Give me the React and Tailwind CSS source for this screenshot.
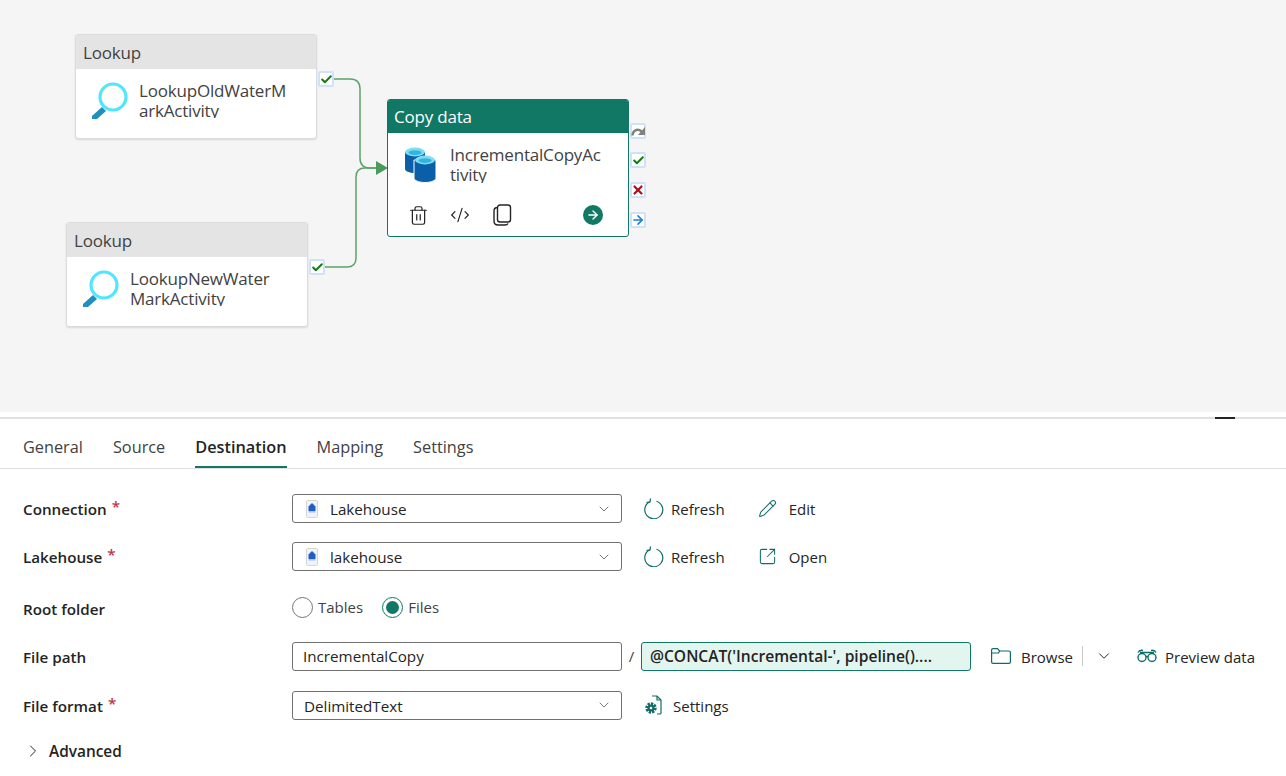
import { ChevronDown, ChevronRight, Pencil, SquareArrowOutUpRight, Trash2, CodeXml, ArrowRight, Check, X } from "lucide-react";

const font = "font-['Open_Sans','Noto_Sans',sans-serif]";

function LookupIcon() {
  return (
    <svg width="38" height="40" viewBox="0 0 38 40" fill="none">
      <path d="M1 34l10-9 4 4-9 8H1z" fill="#1f8fbd" />
      <circle cx="22" cy="15" r="13" stroke="#50e6ff" strokeWidth="3.2" fill="#fff" />
    </svg>
  );
}

function CopyIcon() {
  const Can = ({ x, y }) => (
    <g>
      <path d={`M${x} ${y}v17c0 2 4 4 10 4s10-2 10-4v-17z`} fill="#0a5fa8" />
      <ellipse cx={x + 10} cy={y} rx="10" ry="4.4" fill="#7fdcf2" />
      <ellipse cx={x + 10} cy={y + 0.6} rx="6.6" ry="2.4" fill="#2fb5e0" />
    </g>
  );
  return (
    <svg width="32" height="36" viewBox="0 0 32 36">
      <Can x={1} y={5} />
      <path d="M10 13h22v18c0 2.4-4.5 4.500-11 4.500S10 33.400 10 31z" fill="#0a5fa8" stroke="#fff" strokeWidth="1" />
      <Can x={11} y={13} />
    </svg>
  );
}

function LakehouseIcon() {
  return (
    <svg width="12" height="18" viewBox="0 0 12 18">
      <rect x="0.5" y="0.5" width="11" height="17" rx="1" fill="#f3f3f3" stroke="#d6d6d6" />
      <path d="M2.5 6.5L6 3l3.5 3.5V11h-7z" fill="#1d5fc4" />
      <rect x="2.5" y="11" width="7" height="1.6" fill="#a9c4ea" />
    </svg>
  );
}

function RefreshIcon() {
  return (
    <svg width="20" height="21" viewBox="0 0 20 21" fill="none" stroke="#0f6d67" strokeWidth="1.2">
      <path d="M12.500 3.200A9 9 0 1 1 6 3.600" />
      <path d="M6.500 0.500L6 4l-3.500.3" />
    </svg>
  );
}

function FolderIcon() {
  return (
    <svg width="20" height="16" viewBox="0 0 20 16" fill="none" stroke="#0f6d67" strokeWidth="1.2">
      <path d="M.6 14V2a1.400 1.400 0 0 1 1.400-1.400h4.500l2 2.400H18a1.400 1.400 0 0 1 1.400 1.400V14a1.400 1.400 0 0 1-1.400 1.400H2A1.400 1.400 0 0 1 .6 14z" />
      <path d="M.6 5h7l1-2" />
    </svg>
  );
}

function GlassesIcon() {
  return (
    <svg width="20" height="14" viewBox="0 0 20 14" fill="none" stroke="#0f6d67" strokeWidth="1.4">
      <path d="M1 3.500C2 1.500 4 1 6 1.500M19 3.500C18 1.500 16 1 14 1.500M3 3.500h14" />
      <circle cx="5" cy="8.500" r="4" />
      <circle cx="15" cy="8.500" r="4" />
      <path d="M9 7.500h2" />
    </svg>
  );
}

function PagesIcon() {
  return (
    <svg width="20" height="22" viewBox="0 0 20 22" fill="none" stroke="#242424" strokeWidth="1.4">
      <rect x="5.500" y="1" width="13" height="17" rx="2.500" />
      <path d="M5.500 3.500C3 3.500 2 5 2 7v10c0 2.500 1.500 4 4 4h7c1.500 0 2.500-.5 3-1.500" />
    </svg>
  );
}

function RedoIcon() {
  return (
    <svg width="14" height="12" viewBox="0 0 14 12" fill="none">
      <path d="M1.500 10.500C2 4.500 8 3 11 7" stroke="#808080" strokeWidth="2.400" />
      <path d="M14 2v8H7z" fill="#808080" />
    </svg>
  );
}

function Port({ className, children }) {
  return (
    <div className={`absolute flex h-4 w-4 items-center justify-center rounded-[2px] border-2 border-[#cfe2f7] bg-white ${className}`}>
      {children}
    </div>
  );
}

function LookupNode({ className, name }) {
  return (
    <div className={`absolute h-[105px] w-[242px] overflow-hidden rounded-[3px] border border-[#dcdcdc] bg-white shadow-[0_1px_2px_rgba(0,0,0,0.12)] ${className}`}>
      <div className="flex h-[34px] items-center bg-[#e4e4e4] pl-[7px] pt-[2px] text-[17px] tracking-[-0.2px] text-[#424242]">Lookup</div>
      <div className="flex pl-[15px] pt-[13px]">
        <LookupIcon />
        <div className="-mt-[1px] ml-[10px] h-[37px] w-[150px] overflow-hidden break-all text-[17px] leading-[20px] tracking-[-0.2px] text-[#424242]">
          {name}
        </div>
      </div>
    </div>
  );
}

function Row({ label, required, children, className = "" }) {
  return (
    <div className={`flex items-center ${className}`}>
      <div className="w-[292px] shrink-0 pl-[23px] pt-[2px] text-[15.2px] font-semibold text-[#242424]">
        {label}
        {required && <span className="relative -top-[3px] ml-[5px] text-[#c4314b]">*</span>}
      </div>
      {children}
    </div>
  );
}

function Dropdown({ icon, value }) {
  return (
    <div className="flex h-[29px] w-[330px] items-center rounded-[3px] border border-[#707070] bg-white pl-[11px] pr-[9px] text-[15.2px] text-[#242424]">
      {icon && <span className="ml-[2px] mr-[12px] flex"><LakehouseIcon /></span>}
      <span className="flex-1 pt-[2px]">{value}</span>
      <ChevronDown size={16} strokeWidth={1.2} className="text-[#555]" />
    </div>
  );
}

function Action({ icon, label, gap = "mr-[7px]", className = "" }) {
  return (
    <div className={`flex items-center text-[15px] text-[#242424] ${className}`}>
      <span className={`flex text-[#0f6d67] ${gap}`}>{icon}</span>
      <span className="pt-[2px]">{label}</span>
    </div>
  );
}

export default function App() {
  return (
    <div className={`h-[776px] w-[1286px] overflow-hidden bg-white ${font}`}>
      <div className="relative h-[412px] bg-[#f5f5f5]">
        <svg width="1286" height="412" className="absolute left-0 top-0" fill="none">
          <path d="M334 79h16q10 0 10 10v69q0 10 10 10h8" stroke="#5aa469" strokeWidth="1.5" />
          <path d="M325 267h22q9 0 9-9v-81q0-9 9-9h13" stroke="#5aa469" strokeWidth="1.5" />
          <path d="M376 161l12 7-12 7z" fill="#4a9a5b" />
        </svg>

        <LookupNode className="left-[75px] top-[34px]" name="LookupOldWaterMarkActivity" />
        <Port className="left-[318px] top-[71px]"><Check size={13} strokeWidth={3.6} className="shrink-0 text-[#107c10]" /></Port>

        <LookupNode className="left-[66px] top-[222px]" name="LookupNewWaterMarkActivity" />
        <Port className="left-[309px] top-[259px]"><Check size={13} strokeWidth={3.6} className="shrink-0 text-[#107c10]" /></Port>

        <div className="absolute left-[387px] top-[99px] h-[138px] w-[242px] overflow-hidden rounded-[3px] border border-[#117865] bg-white">
          <div className="flex h-[33px] items-center bg-[#117865] pl-[6px] pt-[1px] text-[17px] tracking-[-0.2px] text-white">Copy data</div>
          <div className="flex pl-[16px] pt-[14px]">
            <CopyIcon />
            <div className="-mt-[2px] ml-[14px] h-[38px] w-[152px] overflow-hidden break-all text-[17px] leading-[20px] tracking-[-0.2px] text-[#424242]">
              IncrementalCopyActivity
            </div>
          </div>
          <div className="mt-[21px] flex items-center pl-[20px] text-[#242424]">
            <Trash2 size={21} strokeWidth={1.4} />
            <CodeXml size={20} strokeWidth={1.4} className="ml-[21px]" />
            <span className="ml-[22px] flex"><PagesIcon /></span>
            <div className="ml-[71px] flex h-5 w-5 items-center justify-center rounded-full bg-[#117865]">
              <ArrowRight size={14} strokeWidth={2.4} className="text-white" />
            </div>
          </div>
        </div>
        <Port className="left-[630px] top-[123px]"><span className="flex shrink-0"><RedoIcon /></span></Port>
        <Port className="left-[630px] top-[152px]"><Check size={13} strokeWidth={3.6} className="shrink-0 text-[#107c10]" /></Port>
        <Port className="left-[630px] top-[182px]"><X size={14} strokeWidth={3.8} className="shrink-0 text-[#b10e1c]" /></Port>
        <Port className="left-[630px] top-[212px]"><ArrowRight size={14} strokeWidth={2.8} className="shrink-0 text-[#1a7fd4]" /></Port>
      </div>

      <div className="relative mt-[5px] h-[2px] bg-[#e0e0e0]">
        <div className="absolute left-[1215px] top-0 h-[2px] w-[20px] bg-[#242424]" />
      </div>

      <div className="flex h-[50px] items-stretch gap-[30px] border-b border-[#e0e0e0] pl-[23px] text-[16.3px] text-[#424242]">
        <div className="flex items-center pt-[8px]">General</div>
        <div className="flex items-center pt-[8px]">Source</div>
        <div className="flex items-center border-b-2 border-[#117865] pt-[10px] font-semibold text-[#242424]">Destination</div>
        <div className="flex items-center pt-[8px]">Mapping</div>
        <div className="flex items-center pt-[8px]">Settings</div>
      </div>

      <Row label="Connection" required className="mt-[25px]">
        <Dropdown icon value="Lakehouse" />
        <Action className="ml-[22px]" icon={<RefreshIcon />} label="Refresh" />
        <Action className="ml-[33px]" gap="mr-[12px]" icon={<Pencil size={19} strokeWidth={1.3} />} label="Edit" />
      </Row>

      <Row label="Lakehouse" required className="mt-[19px]">
        <Dropdown icon value="lakehouse" />
        <Action className="ml-[22px]" icon={<RefreshIcon />} label="Refresh" />
        <Action className="ml-[33px]" gap="mr-[12px]" icon={<SquareArrowOutUpRight size={19} strokeWidth={1.3} />} label="Open" />
      </Row>

      <Row label="Root folder" className="mt-[25px]">
        <div className="-mt-[2px] flex items-center text-[15px] text-[#424242]">
          <span className="mr-[5px] h-[21px] w-[21px] rounded-full border border-[#757575]" />
          Tables
          <span className="ml-[19px] mr-[5px] flex h-[21px] w-[21px] items-center justify-center rounded-full border border-[#117865]">
            <span className="h-[13px] w-[13px] rounded-full bg-[#117865]" />
          </span>
          Files
        </div>
      </Row>

      <Row label="File path" className="mt-[21px]">
        <div className="flex h-[29px] w-[330px] items-center rounded-[3px] border border-[#707070] pl-[10px] pt-[1px] text-[15.2px] text-[#242424]">IncrementalCopy</div>
        <span className="w-[19px] text-center text-[15px] text-[#424242]">/</span>
        <div className="flex h-[29px] w-[330px] items-center rounded-[3px] border border-[#117865] bg-[#e2f5ee] pl-[8px] pt-[1px] text-[15.6px] font-semibold text-[#242424]">
          @CONCAT('Incremental-', pipeline()....
        </div>
        <Action className="ml-[20px]" gap="mr-[10px]" icon={<FolderIcon />} label="Browse" />
        <div className="ml-[9px] h-[20px] w-px bg-[#c8c8c8]" />
        <ChevronDown size={18} strokeWidth={1.3} className="ml-[12px] text-[#242424]" />
        <Action className="ml-[24px]" gap="mr-[8px]" icon={<GlassesIcon />} label="Preview data" />
      </Row>

      <Row label="File format" required className="mt-[20px]">
        <Dropdown value="DelimitedText" />
        <Action className="ml-[22px]" gap="mr-[11px]" icon={
          <svg width="18" height="20" viewBox="0 0 18 20" fill="none">
            <path d="M8 1h5l4 4v13a1 1 0 0 1-1 1h-3" stroke="#0f6d67" strokeWidth="1.2" />
            <path d="M13 1v4h4" stroke="#0f6d67" strokeWidth="1.2" />
            <circle cx="7" cy="13" r="4.2" stroke="#0f6d67" strokeWidth="3" strokeDasharray="2.2 1" />
            <circle cx="7" cy="13" r="3.6" fill="#0f6d67" />
            <circle cx="7" cy="13" r="1.3" fill="#fff" />
          </svg>
        } label="Settings" />
      </Row>

      <div className="mt-[20px] flex items-center pl-[23px] text-[15.4px] font-semibold text-[#242424]">
        <ChevronRight size={20} strokeWidth={1.2} className="mr-[6px]" />
        Advanced
      </div>
    </div>
  );
}
